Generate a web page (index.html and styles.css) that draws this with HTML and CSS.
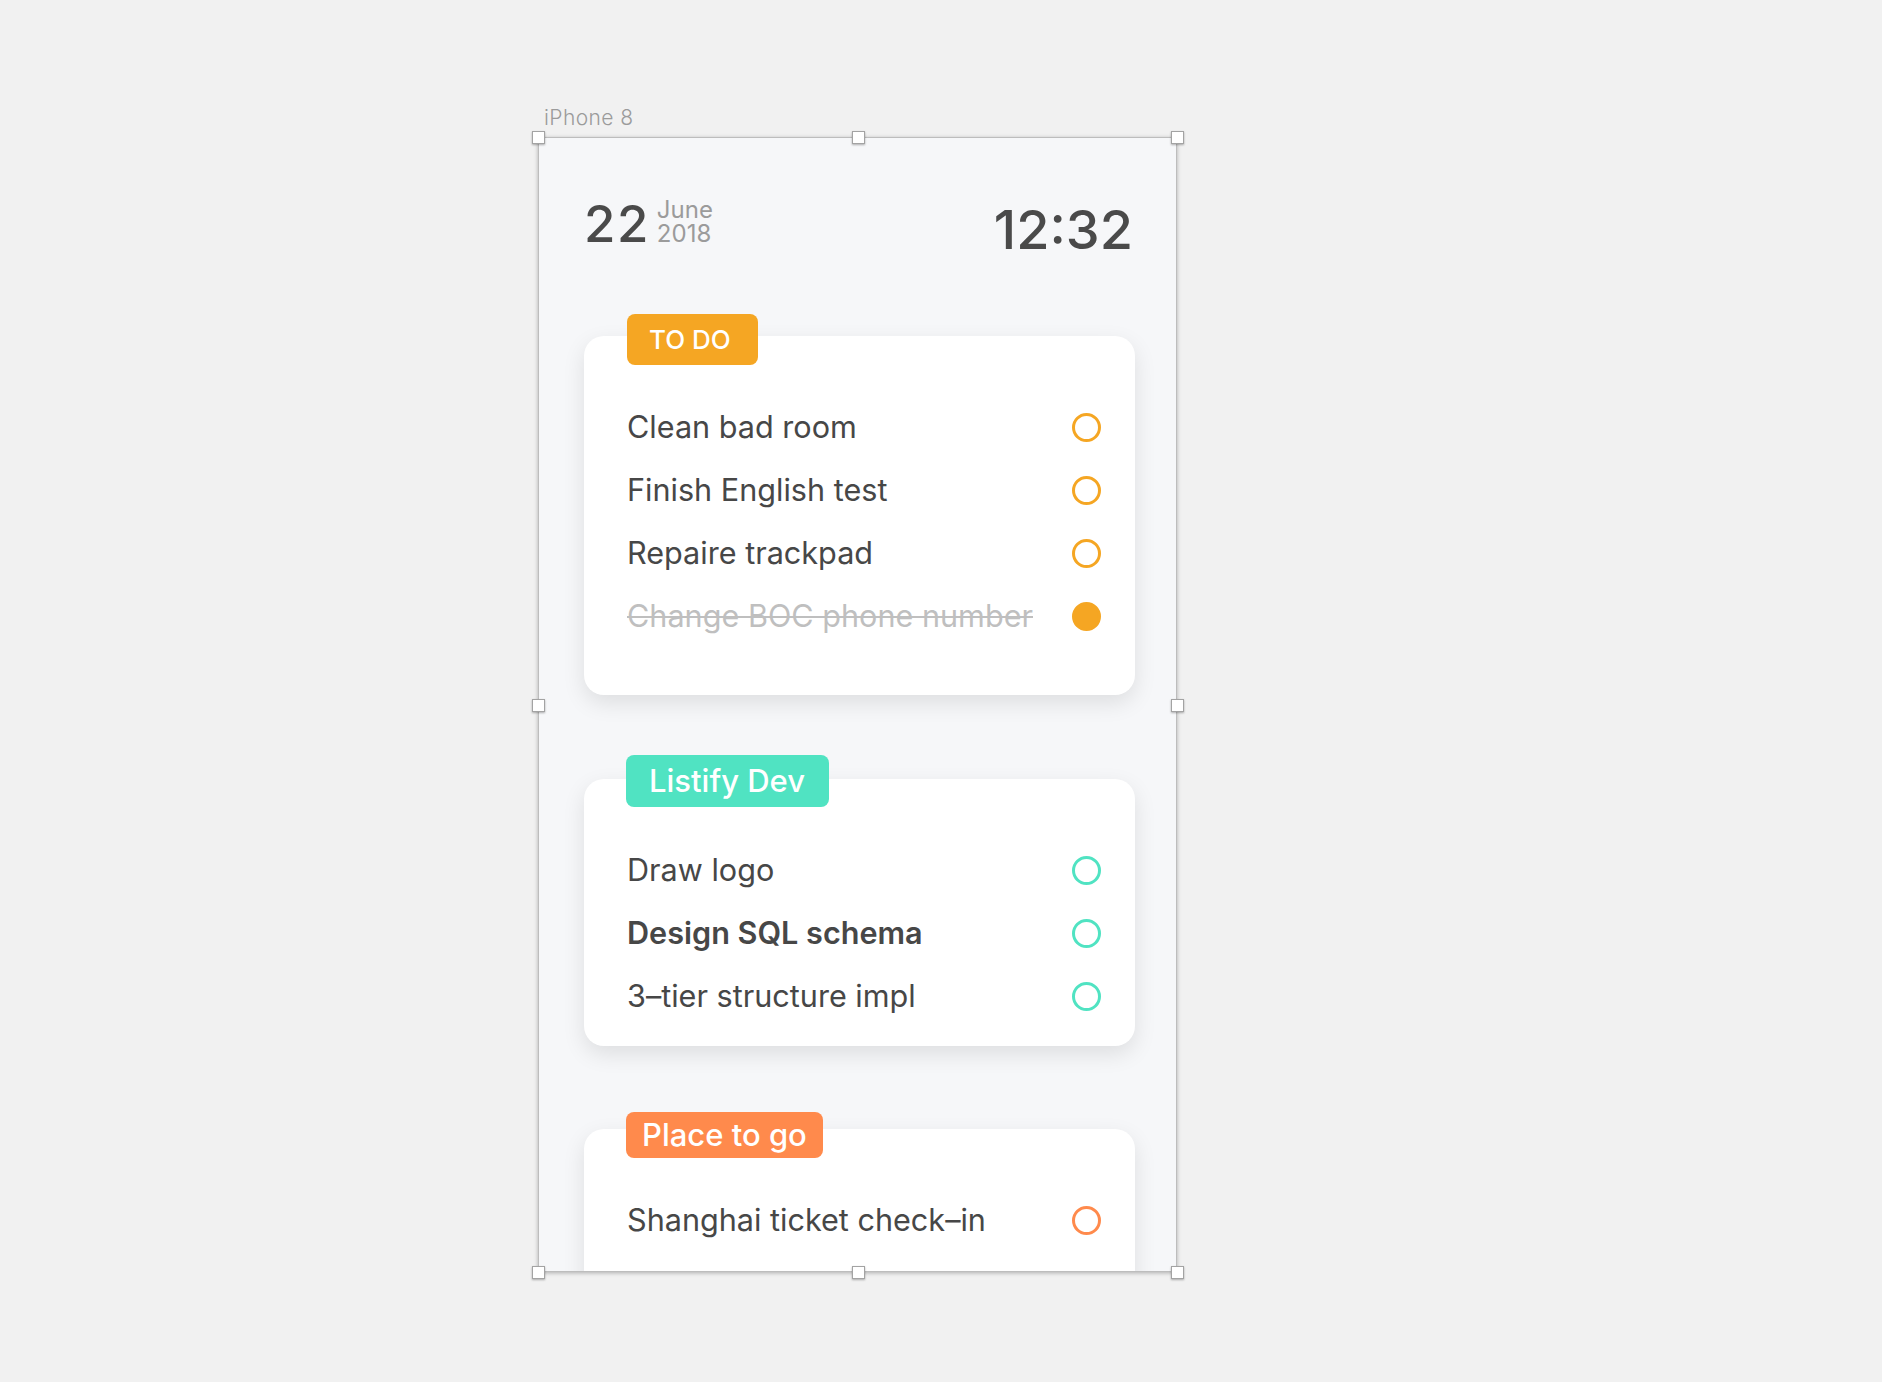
FILE: index.html
```html
<!DOCTYPE html>
<html lang="en">
<head>
<meta charset="utf-8">
<title>Listify – iPhone 8</title>
<link rel="stylesheet" href="styles.css">
</head>
<body>
<div class="stage">
  <div class="artboard-label">iPhone 8</div>
  <div class="artboard">
    <div class="phone">
      <header class="top">
        <div class="date">
          <span class="day">22</span>
          <span class="monthyear"><span>June</span><span>2018</span></span>
        </div>
        <div class="time">12:32</div>
      </header>

      <section class="list list--todo">
        <div class="tag tag--todo">TO DO</div>
        <ul class="items">
          <li class="item"><span class="item-text">Clean bad room</span><span class="check"></span></li>
          <li class="item"><span class="item-text">Finish English test</span><span class="check"></span></li>
          <li class="item"><span class="item-text">Repaire trackpad</span><span class="check"></span></li>
          <li class="item item--done"><span class="item-text">Change BOC phone number</span><span class="check check--done"></span></li>
        </ul>
      </section>

      <section class="list list--dev">
        <div class="tag tag--dev">Listify Dev</div>
        <ul class="items">
          <li class="item"><span class="item-text">Draw logo</span><span class="check"></span></li>
          <li class="item item--bold"><span class="item-text">Design SQL schema</span><span class="check"></span></li>
          <li class="item"><span class="item-text">3–tier structure impl</span><span class="check"></span></li>
        </ul>
      </section>

      <section class="list list--place">
        <div class="tag tag--place">Place to go</div>
        <ul class="items">
          <li class="item"><span class="item-text">Shanghai ticket check–in</span><span class="check"></span></li>
        </ul>
      </section>
    </div>
    <span class="handle handle--tl"></span>
    <span class="handle handle--tc"></span>
    <span class="handle handle--tr"></span>
    <span class="handle handle--ml"></span>
    <span class="handle handle--mr"></span>
    <span class="handle handle--bl"></span>
    <span class="handle handle--bc"></span>
    <span class="handle handle--br"></span>
  </div>
</div>
</body>
</html>
```
FILE: styles.css
```css
html, body {
  margin: 0;
  background: #f1f1f1;
}
body {
  font-family: Inter, "Noto Sans", "Liberation Sans", sans-serif;
}
.stage {
  box-sizing: border-box;
  height: 1382px;
  padding: 107px 0 0 538px;
}
.artboard-label {
  font-size: 21px;
  line-height: 21px;
  letter-spacing: 0.4px;
  color: #9b9b9b;
  margin: 0 0 9px 6px;
  font-weight: 300;
}
.artboard {
  position: relative;
  width: 639px;
  height: 1135px;
}
.phone {
  box-sizing: border-box;
  width: 100%;
  height: 100%;
  border: 1px solid #bdbdbd;
  background: #f6f7f9;
  overflow: hidden;
  box-shadow: 0 1px 4px rgba(0, 0, 0, 0.28);
}
.top {
  box-sizing: border-box;
  height: 111px;
  padding: 61px 43px 0 45px;
  display: flex;
  justify-content: space-between;
  align-items: flex-start;
}
.date {
  display: flex;
  align-items: flex-start;
}
.day {
  font-size: 51px;
  line-height: 50px;
  letter-spacing: 1.5px;
  font-weight: 500;
  color: #4a4a4a;
}
.monthyear {
  display: flex;
  flex-direction: column;
  font-size: 24px;
  line-height: 24px;
  color: #9b9b9b;
  margin: -1px 0 0 7px;
}
.time {
  font-size: 54px;
  line-height: 54px;
  font-weight: 500;
  color: #4a4a4a;
  margin-top: 4px;
}

.list {
  position: relative;
  box-sizing: border-box;
  width: 551px;
  margin: 87px 0 0 45px;
  padding: 59px 34px 48px 43px;
  background: #fff;
  border-radius: 20px;
  box-shadow: 0 8px 22px rgba(0, 0, 0, 0.1);
}
.list--dev {
  margin-top: 84px;
  padding-bottom: 19px;
}
.list--place {
  margin-top: 83px;
  padding-bottom: 60px;
}
.tag {
  position: absolute;
  left: 43px;
  top: -22px;
  height: 51px;
  line-height: 51px;
  padding: 0 27px 0 22px;
  border-radius: 8px;
  color: #fff;
  font-size: 26px;
  font-weight: 500;
}
.tag--todo {
  background: #f5a623;
}
.tag--dev {
  left: 42px;
  top: -24px;
  height: 52px;
  line-height: 52px;
  font-size: 31px;
  padding: 0 24px 0 23px;
  background: #50e3c2;
}
.tag--place {
  left: 42px;
  top: -17px;
  height: 46px;
  line-height: 46px;
  font-size: 31px;
  padding: 0 16px 0 16px;
  background: #ff8a4c;
}
.items {
  list-style: none;
  margin: 0;
  padding: 0;
}
.item {
  display: flex;
  align-items: center;
  justify-content: space-between;
  height: 63px;
  font-size: 30.6px;
  line-height: 63px;
  color: #474747;
}
.item--bold {
  font-weight: 600;
}
.item--done .item-text {
  color: #bfbfbf;
  text-decoration: line-through;
  text-decoration-thickness: 2px;
}
.check {
  box-sizing: border-box;
  width: 29px;
  height: 29px;
  margin-top: 2px;
  border: 3px solid currentColor;
  border-radius: 50%;
  flex: none;
}
.list--todo .check { color: #f5a623; }
.list--dev .check { color: #50e3c2; }
.list--place .check { color: #ff8a4c; }
.check--done {
  background: #f5a623;
}

.handle {
  position: absolute;
  box-sizing: border-box;
  width: 13px;
  height: 13px;
  margin: -6px 0 0 -6px;
  background: #fff;
  border: 1px solid #a3a3a3;
  box-shadow: 0 1px 2px rgba(0, 0, 0, 0.3);
}
.handle--tl { left: 0; top: 0; }
.handle--tc { left: 50%; top: 0; }
.handle--tr { left: 100%; top: 0; }
.handle--ml { left: 0; top: 50%; }
.handle--mr { left: 100%; top: 50%; }
.handle--bl { left: 0; top: 100%; }
.handle--bc { left: 50%; top: 100%; }
.handle--br { left: 100%; top: 100%; }
```
